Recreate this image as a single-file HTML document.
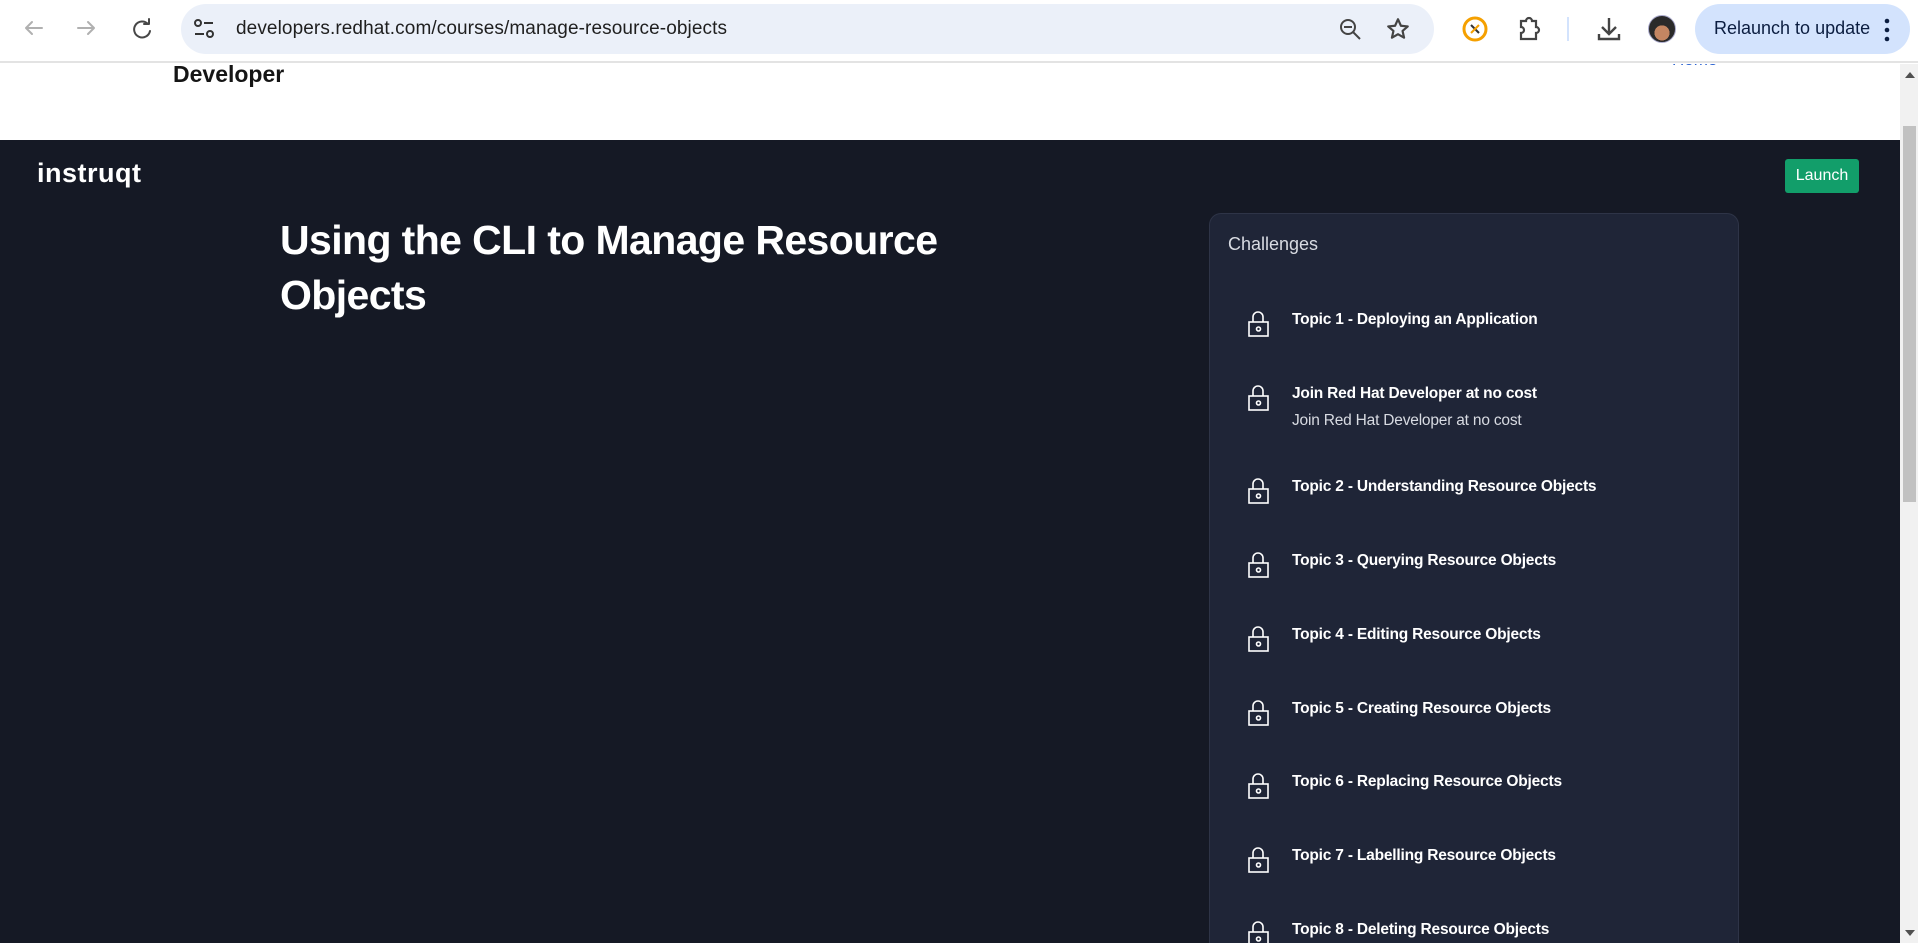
<!DOCTYPE html>
<html style="overflow:hidden;width:1918px;height:943px"><head><meta charset="utf-8"><style>
*{margin:0;padding:0;box-sizing:border-box}
body{width:1918px;height:943px;overflow:hidden;background:#fff;font-family:"Liberation Sans",sans-serif;position:relative}
.abs{position:absolute}
.topbar{left:0;top:0;width:1918px;height:63px;background:#fff;border-bottom:2px solid #e3e3e3}
.pill{left:181px;top:4px;width:1253px;height:50px;background:#ebf0f9;border-radius:25px}
.url{left:236px;top:18px;font-size:19px;color:#1f1f1f;letter-spacing:0.1px}
.relaunch{left:1695px;top:4px;width:215px;height:50px;background:#d3e3fd;border-radius:25px}
.dark{left:0;top:140px;width:1900px;height:803px;background:#151925}
.sb{left:1900px;top:64px;width:18px;height:879px;background:#f1f1f1}
.thumb{left:1903px;top:126px;width:13px;height:376px;background:#c1c1c1}
.card{left:1209px;top:213px;width:530px;height:730px;background:#1f2537;border:1px solid #2e3447;border-bottom:none;border-radius:12px 12px 0 0}
.item{position:absolute;left:1292px;color:#fff;font-weight:bold;font-size:15.5px;letter-spacing:-0.2px;white-space:nowrap}
.lock{position:absolute;left:1248px}
</style></head><body>
<div class="abs topbar"></div>
<svg class="abs" style="left:20px;top:16px" width="140" height="26" viewBox="0 0 140 26" fill="none" stroke-width="2" stroke-linecap="round" stroke-linejoin="round">
<path d="M22 12H6M12 6l-6 6 6 6" stroke="#b0b0b0"/>
<path d="M58 12h16M68 6l6 6-6 6" stroke="#b0b0b0"/>
<path d="M128 8a8 8 0 1 0 2 7M129 3v5h-5" stroke="#474747"/>
</svg>
<div class="abs pill"></div>
<svg class="abs" style="left:192px;top:18px" width="24" height="22" viewBox="0 0 24 22" fill="none" stroke="#333" stroke-width="2"><circle cx="6" cy="5" r="3"/><path d="M12 5h9M3 16h9"/><circle cx="18" cy="16" r="3"/></svg>
<div class="abs url">developers.redhat.com/courses/manage-resource-objects</div>
<svg class="abs" style="left:1338px;top:17px" width="26" height="26" viewBox="0 0 26 26" fill="none" stroke="#444" stroke-width="2"><circle cx="10" cy="10" r="7"/><path d="M6 10h8M15 15l7 7"/></svg>
<svg class="abs" style="left:1385px;top:16px" width="26" height="26" viewBox="0 0 24 24" fill="none" stroke="#444" stroke-width="2" stroke-linejoin="round"><path d="M12 3l2.7 6 6.3.6-4.8 4.2 1.4 6.2L12 16.8 6.4 20l1.4-6.2L3 9.6 9.3 9z"/></svg>
<svg class="abs" style="left:1461px;top:15px" width="28" height="28" viewBox="0 0 28 28"><circle cx="14" cy="14" r="11" fill="#fff" stroke="#f5a000" stroke-width="3"/><path d="M10 10l8 8" stroke="#333" stroke-width="2"/><path d="M18 10l-8 8" stroke="#f5a000" stroke-width="2"/></svg>
<svg class="abs" style="left:1515px;top:15px" width="28" height="28" viewBox="0 0 28 28" fill="none" stroke="#444" stroke-width="2.2"><path d="M6 6h5a3 3 0 0 1 6 0h4v6a3 3 0 0 1 0 6v6H6v-6a3 3 0 0 0 0-6z"/></svg>
<div class="abs" style="left:1567px;top:17px;width:2px;height:24px;background:#d3e3fd"></div>
<svg class="abs" style="left:1596px;top:15px" width="26" height="28" viewBox="0 0 26 28" fill="none" stroke="#444" stroke-width="2.4"><path d="M13 3v15M6 12l7 7 7-7M3 19v5h20v-5"/></svg>
<div class="abs" style="left:1648px;top:15px;width:28px;height:28px;border-radius:50%;background:radial-gradient(circle at 50% 65%,#c48662 0 35%,#2a2a2a 36%);border:1px solid #aac"></div>
<div class="abs relaunch"></div>
<div class="abs" style="left:1714px;top:18px;font-size:18px;color:#0b1d40">Relaunch to update</div>
<svg class="abs" style="left:1882px;top:18px" width="10" height="24"><circle cx="5" cy="3" r="2.3" fill="#0b1d40"/><circle cx="5" cy="12" r="2.3" fill="#0b1d40"/><circle cx="5" cy="21" r="2.3" fill="#0b1d40"/></svg>
<div class="abs" style="left:173px;top:61px;font-size:23px;font-weight:bold;color:#151515">Developer</div>
<div class="abs" style="left:1672px;top:64px;width:60px;height:6px;overflow:hidden"><div style="margin-top:-14px;font-size:17px;color:#2b62d0">Home</div></div>
<div class="abs dark"></div>
<div class="abs" style="left:37px;top:158px;font-size:27px;font-weight:bold;color:#fff;letter-spacing:0.5px">instruqt</div>
<div class="abs" style="left:1785px;top:159px;width:74px;height:34px;background:#129e6a;border-radius:3px;color:#fff;font-size:16px;line-height:34px;text-align:center">Launch</div>
<div class="abs" style="left:280px;top:213px;font-size:41px;font-weight:bold;color:#fff;line-height:55px;letter-spacing:-0.6px">Using the CLI to Manage Resource<br>Objects</div>
<div class="abs card"></div>
<div class="abs" style="left:1228px;top:234px;font-size:18px;color:#d8dbe2">Challenges</div>
<svg width="0" height="0" style="position:absolute"><defs><g id="lk" fill="none" stroke="#fff" stroke-width="1.6"><path d="M5 11V6a5 5 0 0 1 10 0v5"/><rect x="1" y="11" width="19" height="14"/><circle cx="10.5" cy="18" r="2"/></g></defs></svg>
<div class="item" style="top:311px">Topic 1 - Deploying an Application</div>
<svg class="lock" style="top:311px" width="22" height="27"><use href="#lk"/></svg>
<div class="item" style="top:385px">Join Red Hat Developer at no cost</div>
<div class="item" style="top:412px;font-weight:normal;color:#d8dbe2">Join Red Hat Developer at no cost</div>
<svg class="lock" style="top:385px" width="22" height="27"><use href="#lk"/></svg>
<div class="item" style="top:478px">Topic 2 - Understanding Resource Objects</div>
<svg class="lock" style="top:478px" width="22" height="27"><use href="#lk"/></svg>
<div class="item" style="top:552px">Topic 3 - Querying Resource Objects</div>
<svg class="lock" style="top:552px" width="22" height="27"><use href="#lk"/></svg>
<div class="item" style="top:626px">Topic 4 - Editing Resource Objects</div>
<svg class="lock" style="top:626px" width="22" height="27"><use href="#lk"/></svg>
<div class="item" style="top:700px">Topic 5 - Creating Resource Objects</div>
<svg class="lock" style="top:700px" width="22" height="27"><use href="#lk"/></svg>
<div class="item" style="top:773px">Topic 6 - Replacing Resource Objects</div>
<svg class="lock" style="top:773px" width="22" height="27"><use href="#lk"/></svg>
<div class="item" style="top:847px">Topic 7 - Labelling Resource Objects</div>
<svg class="lock" style="top:847px" width="22" height="27"><use href="#lk"/></svg>
<div class="item" style="top:921px">Topic 8 - Deleting Resource Objects</div>
<svg class="lock" style="top:921px" width="22" height="27"><use href="#lk"/></svg>
<div class="abs sb"></div>
<div class="abs thumb"></div>
<div class="abs" style="left:1905px;top:72px;width:0;height:0;border-left:5px solid transparent;border-right:5px solid transparent;border-bottom:6px solid #505050"></div>
<div class="abs" style="left:1905px;top:930px;width:0;height:0;border-left:5px solid transparent;border-right:5px solid transparent;border-top:6px solid #505050"></div>
</body></html>
